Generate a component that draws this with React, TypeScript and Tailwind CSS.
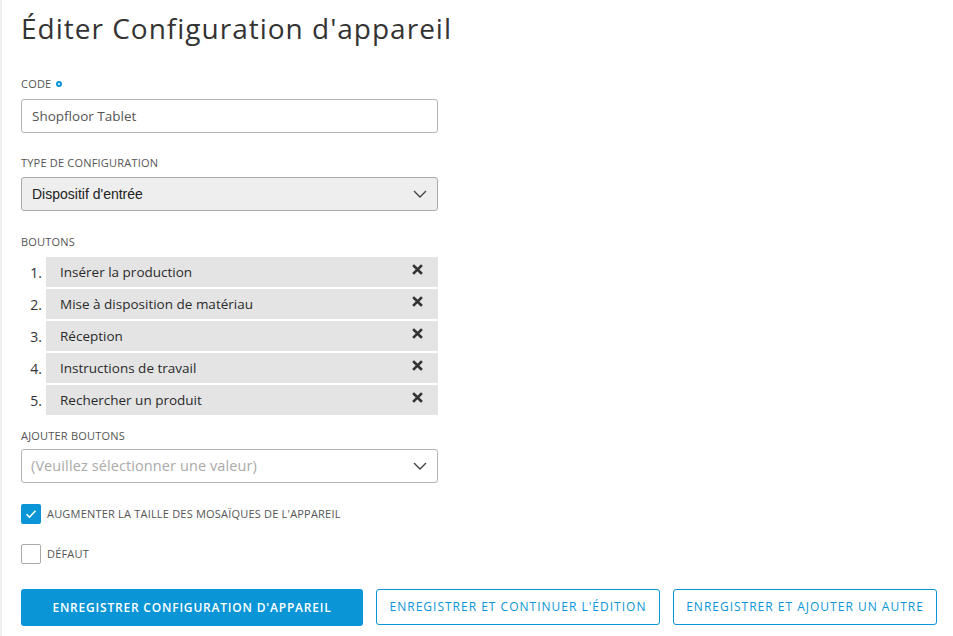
import React from "react";

const items = [
  "Insérer la production",
  "Mise à disposition de matériau",
  "Réception",
  "Instructions de travail",
  "Rechercher un produit",
];

const Chevron = () => (
  <svg width="14" height="8" viewBox="0 0 14 8" fill="none">
    <path d="M1 1l6 6 6-6" stroke="#444" strokeWidth="1.4" />
  </svg>
);

const XIcon = () => (
  <svg width="11" height="11" viewBox="0 0 11 11">
    <path d="M2 2l7 7M9 2l-7 7" stroke="#333" strokeWidth="2.6" strokeLinecap="square" />
  </svg>
);

export default function App() {
  const label = "text-[11px] uppercase text-[#555] tracking-[0.2px]";
  return (
    <div className="w-[953px] h-[636px] bg-white border-l-2 border-[#eeeeee] overflow-hidden" style={{ fontFamily: "'Open Sans', sans-serif" }}>
      <div className="pl-[19px] pt-[11px]">
        <h1 className="text-[28px] leading-[34px] text-[#333] tracking-[1px] font-normal">Éditer Configuration d'appareil</h1>

        <div className="mt-[31px] flex items-center gap-[5px] h-[16px]">
          <span className={label}>Code</span>
          <span className="w-[6px] h-[6px] rounded-full border-[2px] border-[#0a95d6]" />
        </div>
        <div className="mt-[7px] w-[417px] h-[34px] border border-[#b5b5b5] rounded-[3px] flex items-center px-[10px] text-[13.5px] text-[#555]">
          Shopfloor Tablet
        </div>

        <div className="mt-[22px] h-[16px] flex items-center">
          <span className={label}>Type de configuration</span>
        </div>
        <div className="mt-[6px] w-[417px] h-[34px] border border-[#aaa] rounded-[3px] bg-[#eeeeee] flex items-center justify-between pl-[10px] pr-[10px] text-[14px] text-[#222]" style={{ fontFamily: "'Liberation Sans', Arial, sans-serif" }}>
          <span>Dispositif d'entrée</span>
          <Chevron />
        </div>

        <div className="mt-[23px] h-[16px] flex items-center">
          <span className={label}>Boutons</span>
        </div>
        <div className="mt-[7px] flex flex-col gap-[2px]">
          {items.map((t, i) => (
            <div key={t} className="flex items-center h-[30px]">
              <span className="w-[25px] text-right pr-[4px] text-[14px] text-[#333]">{i + 1}.</span>
              <div className="w-[392px] h-[30px] bg-[#e4e4e4] flex items-center justify-between pl-[14px] pr-[15px] text-[13.5px] text-[#2a2a2a]">
                <span>{t}</span>
                <span className="-mt-[6px]"><XIcon /></span>
              </div>
            </div>
          ))}
        </div>

        <div className="mt-[13px] h-[16px] flex items-center">
          <span className={label}>Ajouter boutons</span>
        </div>
        <div className="mt-[5px] w-[417px] h-[34px] border border-[#b5b5b5] rounded-[3px] flex items-center justify-between pl-[9px] pr-[10px] text-[14.5px] text-[#aaa] tracking-[0.1px]">
          <span>(Veuillez sélectionner une valeur)</span>
          <Chevron />
        </div>

        <div className="mt-[21px] flex items-center gap-[6px] h-[20px]">
          <span className="w-[20px] h-[20px] rounded-[2px] bg-[#0a95d6] flex items-center justify-center">
            <svg width="12" height="10" viewBox="0 0 12 10"><path d="M1.5 5.2l3 3 6-6.5" stroke="#fff" strokeWidth="1.6" fill="none" /></svg>
          </span>
          <span className={label}>Augmenter la taille des mosaïques de l'appareil</span>
        </div>
        <div className="mt-[20px] flex items-center gap-[6px] h-[20px]">
          <span className="w-[20px] h-[20px] rounded-[2px] border border-[#aaa] bg-white" />
          <span className={label}>Défaut</span>
        </div>

        <div className="mt-[25px] flex gap-[13px]">
          <button className="w-[342px] h-[37px] rounded-[3px] bg-[#0a95d6] text-white text-[12px] font-semibold tracking-[0.8px] uppercase">Enregistrer configuration d'appareil</button>
          <button className="w-[284px] h-[36px] rounded-[3px] border border-[#0a95d6] text-[#0a95d6] text-[12px] tracking-[1px] uppercase">Enregistrer et continuer l'édition</button>
          <button className="w-[264px] h-[36px] rounded-[3px] border border-[#0a95d6] text-[#0a95d6] text-[12px] tracking-[1px] uppercase">Enregistrer et ajouter un autre</button>
        </div>
      </div>
    </div>
  );
}
